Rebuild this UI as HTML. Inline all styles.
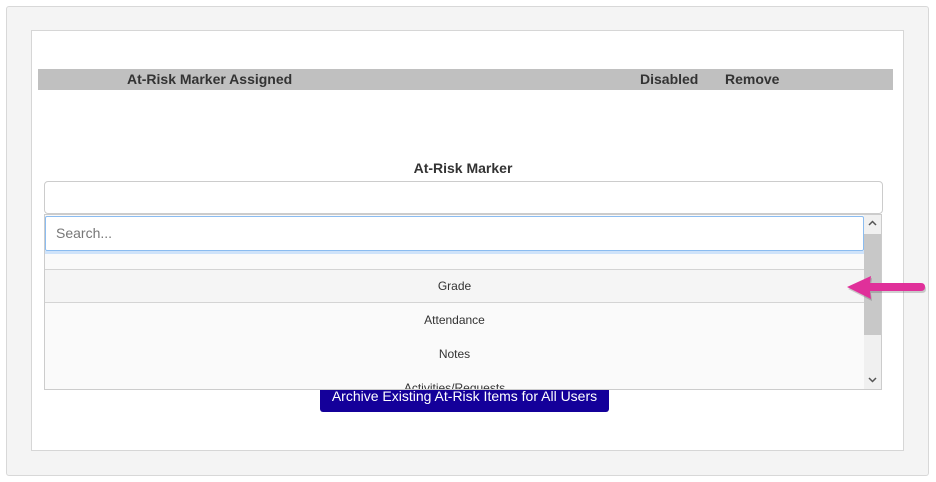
<!DOCTYPE html>
<html><head><meta charset="utf-8"><style>
*{box-sizing:border-box;margin:0;padding:0}
body{width:936px;height:482px;background:#fff;font-family:"Liberation Sans",Arial,sans-serif;position:relative;overflow:hidden;color:#333}
.abs{position:absolute}
</style></head><body>
<div class="abs" style="left:6px;top:6px;width:923px;height:470px;background:#f4f4f4;border:1px solid #d8d8d8;border-radius:3px"></div>
<div class="abs" style="left:31px;top:30px;width:873px;height:421px;background:#fff;border:1px solid #d6d6d6"></div>
<div class="abs" style="left:38px;top:69px;width:855px;height:21px;background:#c0c0c0;font-size:14px;font-weight:bold;line-height:21px">
<span class="abs" style="left:89px">At-Risk Marker Assigned</span>
<span class="abs" style="left:602px">Disabled</span>
<span class="abs" style="left:687px">Remove</span>
</div>
<div class="abs" style="left:0;width:926px;top:159px;text-align:center;font-size:14px;font-weight:bold;line-height:18px">At-Risk Marker</div>
<div class="abs" style="left:320px;top:380px;width:289px;height:32px;background:#14009a;border-radius:3px;color:#fff;font-size:14px;text-align:center;line-height:32px">Archive Existing At-Risk Items for All Users</div>
<div class="abs" style="left:44px;top:181px;width:839px;height:33px;background:#fff;border:1px solid #ccc;border-radius:4px"></div>
<div class="abs" style="left:44px;top:214px;width:838px;height:176px;background:#fafafa;border:1px solid #ccc;overflow:hidden">
 <div class="abs" style="left:0;top:1px;width:819px;height:35px;background:#fff;border:1px solid #8bbcf0;border-radius:2px;font-size:14px;color:#777;line-height:33px;padding-left:10px">Search...</div>
 <div class="abs" style="left:0;top:36px;width:819px;height:3px;background:#cfe3fa"></div>
 <div class="abs" style="left:0;top:54px;width:819px;height:34px;background:#f5f5f5;border-top:1px solid #d4d4d4;border-bottom:1px solid #d4d4d4;text-align:center;font-size:12px;line-height:32px">Grade</div>
 <div class="abs" style="left:0;top:88px;width:819px;height:34px;text-align:center;font-size:12px;line-height:34px">Attendance</div>
 <div class="abs" style="left:0;top:122px;width:819px;height:34px;text-align:center;font-size:12px;line-height:34px">Notes</div>
 <div class="abs" style="left:0;top:156px;width:819px;height:34px;text-align:center;font-size:12px;line-height:34px">Activities/Requests</div>
 <div class="abs" style="left:819px;top:0;width:17px;height:174px;background:#f0f0f0">
  <svg class="abs" style="left:4px;top:5px" width="9" height="6"><path d="M1 5L4.5 1.5L8 5" stroke="#555" stroke-width="1.5" fill="none"/></svg>
  <div class="abs" style="left:0;top:19px;width:17px;height:101px;background:#c8c8c8"></div>
  <svg class="abs" style="left:4px;top:162px" width="9" height="6"><path d="M1 1L4.5 4.5L8 1" stroke="#555" stroke-width="1.5" fill="none"/></svg>
 </div>
</div>
<svg class="abs" style="left:840px;top:272px" width="92" height="34"><path d="M7 15L31 4L30 11L81 11Q85 11 85 15Q85 19 81 19L30 19L31 27Z" fill="#444" opacity=".25" transform="translate(1,2)"/><path d="M7 15L31 4L30 11L81 11Q85 11 85 15Q85 19 81 19L30 19L31 27Z" fill="#e0309a"/></svg>
</body></html>
